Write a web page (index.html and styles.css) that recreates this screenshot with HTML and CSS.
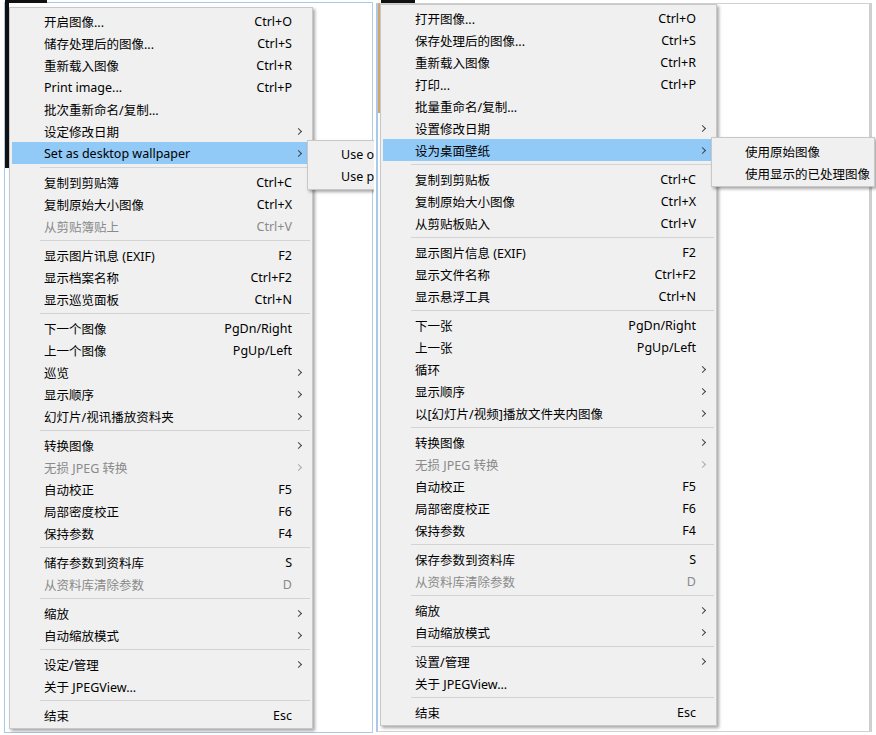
FILE: index.html
```html
<!DOCTYPE html>
<html lang="zh-CN">
<head>
    <meta charset="UTF-8">
    <title>JPEGView 菜单对比</title>
    <link rel="stylesheet" href="styles.css">
</head>
<body>
    <div class="panel panel-left">
        <div class="win"></div>
        <div class="win-dark"></div>
        <div class="win-bar"></div>

        <div class="menu menu-left">
            <div class="item"><span class="label">开启图像...</span><span class="key">Ctrl+O</span></div>
            <div class="item"><span class="label">储存处理后的图像...</span><span class="key">Ctrl+S</span></div>
            <div class="item"><span class="label">重新载入图像</span><span class="key">Ctrl+R</span></div>
            <div class="item"><span class="label">Print image...</span><span class="key">Ctrl+P</span></div>
            <div class="item"><span class="label">批次重新命名/复制...</span></div>
            <div class="item sub"><span class="label">设定修改日期</span></div>
            <div class="item sub hl"><span class="label">Set as desktop wallpaper</span></div>
            <div class="sep"></div>
            <div class="item"><span class="label">复制到剪贴簿</span><span class="key">Ctrl+C</span></div>
            <div class="item"><span class="label">复制原始大小图像</span><span class="key">Ctrl+X</span></div>
            <div class="item off"><span class="label">从剪贴簿贴上</span><span class="key">Ctrl+V</span></div>
            <div class="sep"></div>
            <div class="item"><span class="label">显示图片讯息 (EXIF)</span><span class="key">F2</span></div>
            <div class="item"><span class="label">显示档案名称</span><span class="key">Ctrl+F2</span></div>
            <div class="item"><span class="label">显示巡览面板</span><span class="key">Ctrl+N</span></div>
            <div class="sep"></div>
            <div class="item"><span class="label">下一个图像</span><span class="key">PgDn/Right</span></div>
            <div class="item"><span class="label">上一个图像</span><span class="key">PgUp/Left</span></div>
            <div class="item sub"><span class="label">巡览</span></div>
            <div class="item sub"><span class="label">显示顺序</span></div>
            <div class="item sub"><span class="label">幻灯片/视讯播放资料夹</span></div>
            <div class="sep"></div>
            <div class="item sub"><span class="label">转换图像</span></div>
            <div class="item sub off"><span class="label">无损 JPEG 转换</span></div>
            <div class="item"><span class="label">自动校正</span><span class="key">F5</span></div>
            <div class="item"><span class="label">局部密度校正</span><span class="key">F6</span></div>
            <div class="item"><span class="label">保持参数</span><span class="key">F4</span></div>
            <div class="sep"></div>
            <div class="item"><span class="label">储存参数到资料库</span><span class="key">S</span></div>
            <div class="item off"><span class="label">从资料库清除参数</span><span class="key">D</span></div>
            <div class="sep"></div>
            <div class="item sub"><span class="label">缩放</span></div>
            <div class="item sub"><span class="label">自动缩放模式</span></div>
            <div class="sep"></div>
            <div class="item sub"><span class="label">设定/管理</span></div>
            <div class="item"><span class="label">关于 JPEGView...</span></div>
            <div class="sep"></div>
            <div class="item"><span class="label">结束</span><span class="key">Esc</span></div>
        </div>

        <div class="menu submenu submenu-left">
            <div class="item"><span class="label">Use original image</span></div>
            <div class="item"><span class="label">Use processed image</span></div>
        </div>
    </div>

    <div class="panel panel-right">
        <div class="win win-r"></div>
        <div class="win-edge"></div>
        <div class="win-bar win-bar-r"></div>

        <div class="menu menu-right">
            <div class="item"><span class="label">打开图像...</span><span class="key">Ctrl+O</span></div>
            <div class="item"><span class="label">保存处理后的图像...</span><span class="key">Ctrl+S</span></div>
            <div class="item"><span class="label">重新载入图像</span><span class="key">Ctrl+R</span></div>
            <div class="item"><span class="label">打印...</span><span class="key">Ctrl+P</span></div>
            <div class="item"><span class="label">批量重命名/复制...</span></div>
            <div class="item sub"><span class="label">设置修改日期</span></div>
            <div class="item sub hl"><span class="label">设为桌面壁纸</span></div>
            <div class="sep"></div>
            <div class="item"><span class="label">复制到剪贴板</span><span class="key">Ctrl+C</span></div>
            <div class="item"><span class="label">复制原始大小图像</span><span class="key">Ctrl+X</span></div>
            <div class="item"><span class="label">从剪贴板贴入</span><span class="key">Ctrl+V</span></div>
            <div class="sep"></div>
            <div class="item"><span class="label">显示图片信息 (EXIF)</span><span class="key">F2</span></div>
            <div class="item"><span class="label">显示文件名称</span><span class="key">Ctrl+F2</span></div>
            <div class="item"><span class="label">显示悬浮工具</span><span class="key">Ctrl+N</span></div>
            <div class="sep"></div>
            <div class="item"><span class="label">下一张</span><span class="key">PgDn/Right</span></div>
            <div class="item"><span class="label">上一张</span><span class="key">PgUp/Left</span></div>
            <div class="item sub"><span class="label">循环</span></div>
            <div class="item sub"><span class="label">显示顺序</span></div>
            <div class="item sub"><span class="label">以[幻灯片/视频]播放文件夹内图像</span></div>
            <div class="sep"></div>
            <div class="item sub"><span class="label">转换图像</span></div>
            <div class="item sub off"><span class="label">无损 JPEG 转换</span></div>
            <div class="item"><span class="label">自动校正</span><span class="key">F5</span></div>
            <div class="item"><span class="label">局部密度校正</span><span class="key">F6</span></div>
            <div class="item"><span class="label">保持参数</span><span class="key">F4</span></div>
            <div class="sep"></div>
            <div class="item"><span class="label">保存参数到资料库</span><span class="key">S</span></div>
            <div class="item off"><span class="label">从资料库清除参数</span><span class="key">D</span></div>
            <div class="sep"></div>
            <div class="item sub"><span class="label">缩放</span></div>
            <div class="item sub"><span class="label">自动缩放模式</span></div>
            <div class="sep"></div>
            <div class="item sub"><span class="label">设置/管理</span></div>
            <div class="item"><span class="label">关于 JPEGView...</span></div>
            <div class="sep"></div>
            <div class="item"><span class="label">结束</span><span class="key">Esc</span></div>
        </div>

        <div class="menu submenu submenu-right">
            <div class="item"><span class="label">使用原始图像</span></div>
            <div class="item"><span class="label">使用显示的已处理图像</span></div>
        </div>
    </div>
</body>
</html>
```

FILE: styles.css
```css
body {
    margin: 0;
    width: 876px;
    height: 735px;
    overflow: hidden;
    display: flex;
    background: #fff;
    font-family: "Noto Sans", "Noto Sans CJK SC", sans-serif;
    font-size: 12.5px;
    color: #000;
}

.panel {
    position: relative;
    height: 735px;
    overflow: hidden;
}

.panel-left {
    width: 374px;
}

.panel-right {
    width: 502px;
}

/* windows behind the menus */
.win {
    position: absolute;
    left: 4px;
    top: 2px;
    right: 1px;
    bottom: 2px;
    border: 1px solid #a9c9ea;
    border-right-color: #b9cde2;
}

.win-dark {
    position: absolute;
    left: 5px;
    top: 0;
    width: 4px;
    height: 168px;
    background: #111;
}

.win-bar {
    position: absolute;
    left: 9px;
    top: 0;
    width: 38px;
    height: 3px;
    background: #111;
}

.win-r {
    left: 2px;
    top: 3px;
    right: 4px;
    bottom: 3px;
    border: 1px solid #d2d2d2;
    border-left: 2px solid #a9c9ea;
    border-right: 3px solid #cfcfcf;
}

.win-edge {
    position: absolute;
    left: 4px;
    top: 3px;
    width: 2px;
    height: 110px;
    background: #d8a56a;
}

.win-bar-r {
    left: 7px;
    width: 34px;
}

/* menus */
.menu {
    position: absolute;
    background: #f0f0f0;
    border: 1px solid #c8c8c8;
    padding: 2px;
    box-shadow: 2px 2px 3px rgba(0, 0, 0, 0.35);
}

.menu-left {
    left: 9px;
    top: 7px;
    width: 298px;
}

.menu-right {
    left: 6px;
    top: 4px;
    width: 331px;
}

.submenu {
    z-index: 2;
}

.submenu .item {
    grid-template-columns: 1fr;
    padding: 0 0 0 31px;
}

.submenu-left {
    left: 307px;
    top: 140px;
    width: 160px;
}

.submenu-right {
    left: 337px;
    top: 137px;
    width: 158px;
}

.item {
    display: grid;
    grid-template-columns: 1fr auto 14px;
    align-items: center;
    height: 22px;
    padding: 0 4px 0 32px;
    white-space: nowrap;
}

.label {
    overflow: hidden;
}

.key {
    text-align: right;
}

.sub::after {
    content: "";
    grid-column: 3;
    justify-self: center;
    width: 4px;
    height: 4px;
    margin-left: -2px;
    border-top: 1px solid #444;
    border-right: 1px solid #444;
    transform: rotate(45deg);
}

.hl {
    background: #91c9f7;
}

.off {
    color: #8a8a8a;
}

.off.sub::after {
    border-color: #aaa;
}

.sep {
    height: 4px;
    padding-top: 3px;
    margin-left: 28px;
}

.sep::before {
    content: "";
    display: block;
    height: 1px;
    background: #d3d3d3;
}
```
